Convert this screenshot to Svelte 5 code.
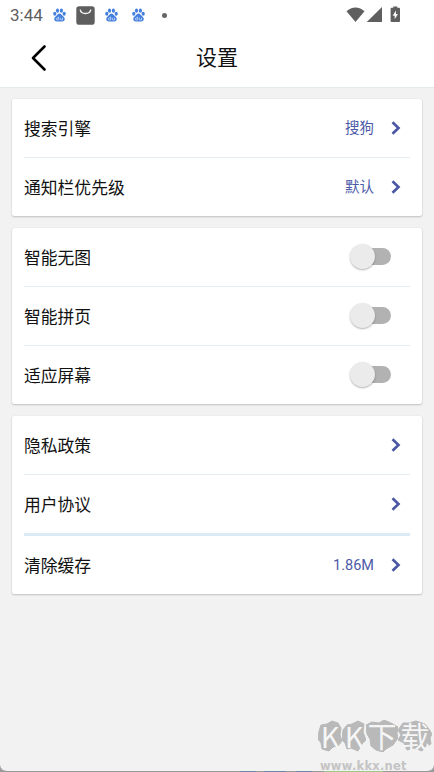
<script lang="ts">
	type Row = { label: string; value?: string; toggle?: boolean; thick?: boolean };

	let groups = $state<Row[][]>([
		[
			{ label: '搜索引擎', value: '搜狗' },
			{ label: '通知栏优先级', value: '默认' }
		],
		[
			{ label: '智能无图', toggle: false },
			{ label: '智能拼页', toggle: false },
			{ label: '适应屏幕', toggle: false }
		],
		[
			{ label: '隐私政策' },
			{ label: '用户协议', thick: true },
			{ label: '清除缓存', value: '1.86M' }
		]
	]);

	const blobs = [
		{ char: 'K', width: 24, points: '1,11 3,5 9,4 14,1 20,3 23,8 22,15 24,21 20,26 15,27 11,31 4,29 3,23 0,19' },
		{ char: 'K', width: 24, points: '1,10 5,5 10,4 16,1 22,4 21,12 24,20 20,24 16,31 9,28 5,29 3,23 0,20' },
		{ char: '下', width: 32, points: '0,5 6,2 13,3 18,0 25,3 32,7 31,14 32,18 27,25 20,29 17,32 10,30 5,26 4,19 1,14' },
		{ char: '载', width: 34, points: '0,10 5,3 11,3 18,1 27,4 31,9 34,14 32,18 33,24 27,27 24,31 16,28 9,30 6,23 0,20 3,15' }
	];
</script>

{#snippet paw()}
	<svg class="paw" width="13" height="14" viewBox="0 0 13 14">
		<g fill="#4680de">
			<ellipse cx="1.8" cy="5.8" rx="1.6" ry="2" />
			<ellipse cx="4.5" cy="2.7" rx="1.6" ry="2.1" />
			<ellipse cx="8.4" cy="2.7" rx="1.6" ry="2.1" />
			<ellipse cx="11.2" cy="5.8" rx="1.6" ry="2" />
			<path d="M6.500 5.400c1.600 0 2.200 1.600 3.400 2.600 1.700 1.400 2.100 2.400 1.700 3.900-.5 1.800-2.700 1.600-5.100 1.600s-4.600.2-5.100-1.600c-.4-1.500 0-2.500 1.700-3.900C4.300 7 4.900 5.400 6.500 5.400z" />
		</g>
		<path d="M5.600 8.700v3.200H4.300a1 1 0 0 1 0-2h1.300M7.300 9.700v1.500q0 .7.700.7h1.500V9.700" fill="none" stroke="#dce8ff" stroke-width=".7" />
	</svg>
{/snippet}

<div class="screen">
	<div class="status-bar">
		<span class="time">3:44</span>
		{@render paw()}
		<svg class="bag" width="19" height="19" viewBox="0 0 19 19">
			<rect x=".3" y=".3" width="18.4" height="18.4" rx="2.8" fill="#5e5e5e" />
			<path d="M4.200 3.500c.8 5.400 9.800 5.400 10.600 0" fill="none" stroke="#f5f5f5" stroke-width="1.400" />
		</svg>
		{@render paw()}
		{@render paw()}
		<span class="dot"></span>
		<svg class="system" width="56" height="18" viewBox="0 0 56 18">
			<g fill="#5f5f5f">
				<path d="M.5 5.300C5.500.2 13.500.2 18.500 5.300L9.500 16z" />
				<path d="M36 1v15H20.800z" />
				<path d="M47.300.5h4v1.300H53q1 0 1 1V15q0 1-1 1h-7.400q-1 0-1-1V2.800q0-1 1-1h1.700z" />
			</g>
			<path d="M49.900 4.600 46.700 9.700h2v3.600l3.200-5.200h-2z" fill="#fff" />
		</svg>
	</div>

	<header>
		<button class="back" aria-label="返回">
			<svg width="16" height="28" viewBox="0 0 16 28">
				<path d="M13.500 2.500 2 14l11.500 11.500" fill="none" stroke="#000" stroke-width="2.600" stroke-linecap="round" stroke-linejoin="round" />
			</svg>
		</button>
		<h1>设置</h1>
	</header>

	<main>
		{#each groups as rows}
			<section class="card">
				{#each rows as row}
					<div class="row" class:thick={row.thick}>
						<span class="label">{row.label}</span>
						{#if row.toggle !== undefined}
							<button
								class="switch"
								class:on={row.toggle}
								role="switch"
								aria-checked={row.toggle}
								aria-label={row.label}
								onclick={() => (row.toggle = !row.toggle)}
							>
								<span class="thumb"></span>
							</button>
						{:else}
							{#if row.value}<span class="value">{row.value}</span>{/if}
							<svg class="chevron" width="10" height="14" viewBox="0 0 10 14">
								<path d="M1.500 1.300 7.500 7l-6 5.700" fill="none" stroke="#4956a3" stroke-width="2.600" />
							</svg>
						{/if}
					</div>
				{/each}
			</section>
		{/each}
	</main>

	<div class="watermark">
		<div class="blobs">
			{#each blobs as blob}
				<span class="blob" style:width="{blob.width}px">
					<svg width={blob.width} height="32">
						<polygon points={blob.points} fill="#b9b9b9" stroke="#b9b9b9" stroke-linejoin="round" />
					</svg>
					<b>{blob.char}</b>
				</span>
			{/each}
		</div>
		<div class="site">www.kkx.net</div>
	</div>
	<div class="bottom-edge"></div>
	<div class="bottom-line"></div>
</div>

<style>
	:global(body) {
		background: #999;
	}

	.screen {
		position: relative;
		box-sizing: border-box;
		height: 772px;
		overflow: hidden;
		background: #f2f2f2;
		font-family: Roboto, 'Noto Sans CJK SC', sans-serif;
		color: #111;
	}

	button {
		padding: 0;
		border: 0;
		background: none;
		cursor: pointer;
	}

	svg {
		display: block;
	}

	.status-bar {
		display: flex;
		align-items: center;
		height: 30px;
		padding: 0 32px 0 10px;
		background: #fff;
	}

	.time {
		width: 43px;
		font-size: 17px;
		color: #5f5f5f;
	}

	.bag {
		margin: 0 10px;
	}

	.paw + .paw {
		margin-left: 14px;
	}

	.dot {
		width: 5px;
		height: 5px;
		margin-left: 17px;
		border-radius: 50%;
		background: #666;
	}

	.system {
		margin: -1px 0 0 auto;
	}

	header {
		display: grid;
		grid-template-columns: 60px 1fr 60px;
		align-items: center;
		box-sizing: border-box;
		height: 58px;
		padding-bottom: 2px;
		background: #fff;
		border-bottom: 1px solid #e4eaea;
	}

	.back {
		margin-left: 31px;
		justify-self: start;
	}

	h1 {
		margin: 0;
		padding-top: 1px;
		font-size: 21px;
		line-height: 30px;
		font-weight: 400;
		text-align: center;
	}

	main {
		display: flex;
		flex-direction: column;
		gap: 12px;
		padding: 11px 12px;
	}

	.card {
		padding: 0 12px;
		background: #fff;
		border-radius: 2px;
		box-shadow: 0 1px 2px rgba(0, 0, 0, 0.2), 0 0 1px rgba(0, 0, 0, 0.12);
	}

	.row {
		display: flex;
		align-items: center;
		box-sizing: border-box;
		height: 59px;
		padding-right: 9px;
		border-bottom: 1px solid #e3eef2;
	}

	.row:last-child {
		height: 58px;
		border-bottom: 0;
	}

	.row.thick {
		height: 61px;
		border-bottom: 3px solid #dbebf5;
	}

	.label {
		padding-top: 2px;
		font-size: 16.8px;
		line-height: 24px;
	}

	.value {
		margin-left: auto;
		padding-top: 2px;
		font-size: 14.5px;
		line-height: 20px;
		color: #4d5aa8;
	}

	.chevron {
		margin-left: auto;
	}

	.value + .chevron {
		margin-left: 17px;
	}

	.switch {
		display: flex;
		align-items: center;
		width: 41px;
		height: 17px;
		margin: -1px 10px 0 auto;
		border-radius: 9px;
		background: linear-gradient(90deg, transparent 12px, #b2b2b2 12px);
	}

	.switch.on {
		justify-content: flex-end;
	}

	.thumb {
		width: 25px;
		height: 25px;
		flex: none;
		border-radius: 50%;
		background: #ebebeb;
		box-shadow: 0 1px 2px rgba(0, 0, 0, 0.3);
	}

	.watermark {
		position: absolute;
		left: 318px;
		top: 720px;
	}

	.blobs {
		display: flex;
	}

	.blob {
		display: grid;
		grid-template-columns: 100%;
		justify-items: center;
		height: 32px;
	}

	.blob > * {
		grid-area: 1 / 1;
	}

	.blob b {
		font-family: 'Noto Sans CJK SC', sans-serif;
		font-size: 29px;
		line-height: 30px;
		font-weight: 400;
		color: #f5f5f5;
	}

	.site {
		margin: 7px 0 0 2px;
		font: bold 11.5px/14px 'DejaVu Sans', sans-serif;
		letter-spacing: 0.25px;
		color: #c4c4c4;
	}

	.bottom-edge {
		position: absolute;
		inset: auto 0 0;
		height: 8px;
		box-sizing: border-box;
		border-bottom: 1px solid #999;
		border-radius: 0 0 7px 7px;
		box-shadow: 0 3px 0 3px #999;
	}

	.bottom-line {
		position: absolute;
		inset: auto 0 0;
		height: 1px;
		background: linear-gradient(
			90deg,
			#999 240px,
			#6d87a8 240px 256px,
			#999 256px 264px,
			#6d87a8 264px 286px,
			#999 286px 296px,
			#6d87a8 296px 312px,
			#999 312px 324px,
			#9ac98b 324px 383px,
			#999 383px
		);
	}
</style>
